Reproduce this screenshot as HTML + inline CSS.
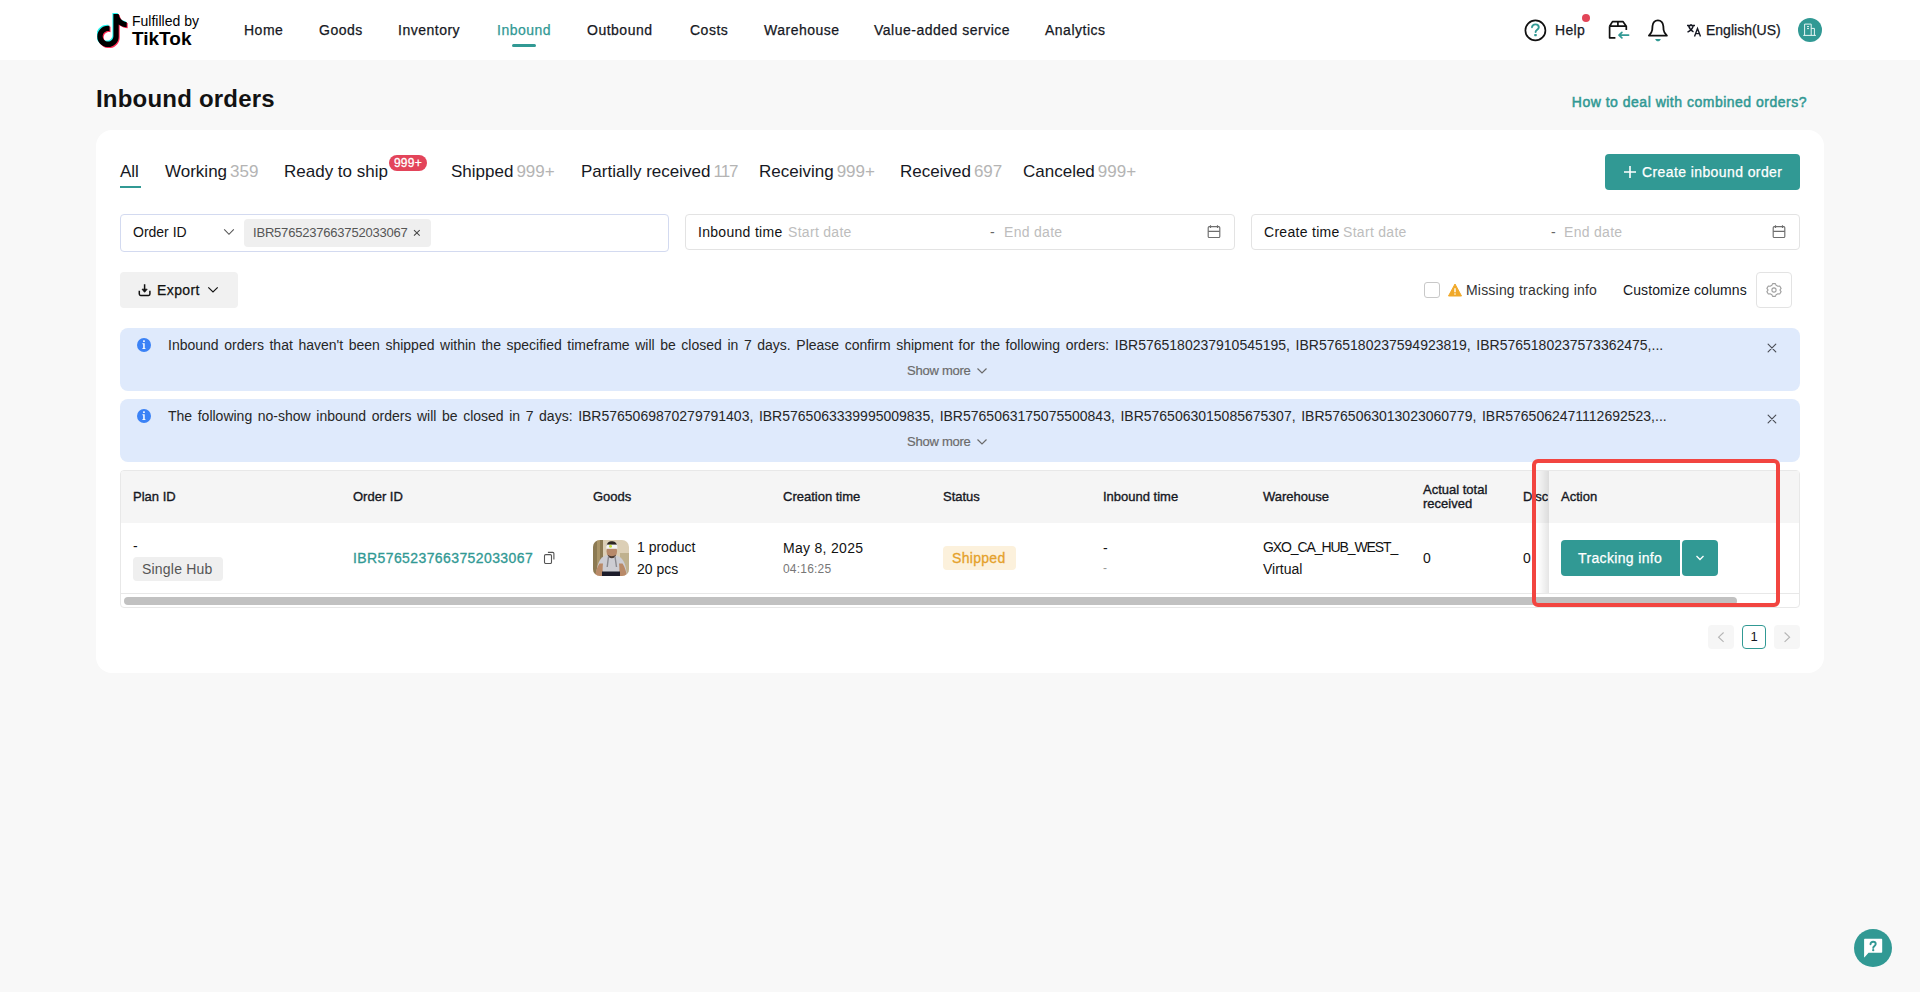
<!DOCTYPE html>
<html><head><meta charset="utf-8">
<style>
*{box-sizing:border-box;margin:0;padding:0}
html,body{width:1920px;height:992px;overflow:hidden}
body{background:#f8f8f8;font-family:"Liberation Sans",sans-serif;color:#121212;position:relative}
.a{position:absolute}
.t{position:absolute;white-space:nowrap;line-height:1}
.m{-webkit-text-stroke:0.25px currentColor}
#hdr{position:absolute;left:0;top:0;width:1920px;height:60px;background:#fff}
.nav{font-size:14px;top:23px;color:#161823;letter-spacing:0.5px}
.card{position:absolute;left:96px;top:130px;width:1728px;height:543px;background:#fff;border-radius:16px}
.tab{font-size:17px;top:163px;color:#161823}
.cnt{color:#b4b4b4;margin-left:3px}
.box{position:absolute;border:1px solid #e3e3e3;border-radius:4px;background:#fff}
.ph{color:#bdbdbd}
.alert{position:absolute;left:120px;width:1680px;height:63px;background:#dfeafc;border-radius:8px}
.th{font-size:13px;color:#161823;-webkit-text-stroke:0.35px #161823}
</style></head>
<body>
<div id="hdr">
  <!-- logo -->
  <svg class="a" style="left:97px;top:12px" width="34" height="36" viewBox="0 0 34 36">
    <g transform="translate(1,1)">
      <path fill="#25F4EE" d="M14.5 0h5.2c.3 2.6 1.6 5 3.6 6.4 1.3.9 2.8 1.5 4.4 1.6v5.2c-2.9 0-5.7-.9-8-2.6v11.8c0 5.9-4.8 10.7-10.7 10.7S-1.7 28.3-1.7 22.4 3.1 11.7 9 11.7c.5 0 1 0 1.5.1v5.4c-.5-.1-1-.2-1.5-.2-2.9 0-5.3 2.4-5.3 5.3S6.1 27.6 9 27.6s5.4-2.4 5.4-5.3V0z"/>
    </g>
    <g transform="translate(3,3)">
      <path fill="#FE2C55" d="M14.5 0h5.2c.3 2.6 1.6 5 3.6 6.4 1.3.9 2.8 1.5 4.4 1.6v5.2c-2.9 0-5.7-.9-8-2.6v11.8c0 5.9-4.8 10.7-10.7 10.7S-1.7 28.3-1.7 22.4 3.1 11.7 9 11.7c.5 0 1 0 1.5.1v5.4c-.5-.1-1-.2-1.5-.2-2.9 0-5.3 2.4-5.3 5.3S6.1 27.6 9 27.6s5.4-2.4 5.4-5.3V0z"/>
    </g>
    <g transform="translate(2,2)">
      <path fill="#000" d="M14.5 0h5.2c.3 2.6 1.6 5 3.6 6.4 1.3.9 2.8 1.5 4.4 1.6v5.2c-2.9 0-5.7-.9-8-2.6v11.8c0 5.9-4.8 10.7-10.7 10.7S-1.7 28.3-1.7 22.4 3.1 11.7 9 11.7c.5 0 1 0 1.5.1v5.4c-.5-.1-1-.2-1.5-.2-2.9 0-5.3 2.4-5.3 5.3S6.1 27.6 9 27.6s5.4-2.4 5.4-5.3V0z"/>
    </g>
  </svg>
  <div class="t" style="left:132px;top:14px;font-size:14px;color:#000">Fulfilled by</div>
  <div class="t" style="left:132px;top:29px;font-size:19px;font-weight:700;color:#000">TikTok</div>

  <div class="t nav m" style="left:244px">Home</div>
  <div class="t nav m" style="left:319px">Goods</div>
  <div class="t nav m" style="left:398px">Inventory</div>
  <div class="t nav m" style="left:497px;color:#319994">Inbound</div>
  <div class="a" style="left:512px;top:44px;width:24px;height:3px;border-radius:2px;background:#319994"></div>
  <div class="t nav m" style="left:587px">Outbound</div>
  <div class="t nav m" style="left:690px">Costs</div>
  <div class="t nav m" style="left:764px">Warehouse</div>
  <div class="t nav m" style="left:874px">Value-added service</div>
  <div class="t nav m" style="left:1045px">Analytics</div>

  <!-- right icons -->
  <svg class="a" style="left:1520px;top:10px" width="40" height="40" viewBox="0 0 40 40">
    <circle cx="15.4" cy="20.4" r="10" fill="none" stroke="#111" stroke-width="1.7"/>
    <path d="M12 17.2C12.3 15.4 13.7 14.4 15.4 14.4C17.3 14.4 18.8 15.6 18.8 17.3C18.8 19.6 15.6 19.9 15.6 22" fill="none" stroke="#319994" stroke-width="1.9" stroke-linecap="round"/>
    <rect x="14.2" y="24" width="2.6" height="2.2" rx=".6" fill="#319994"/>
  </svg>
  <div class="t m" style="left:1555px;top:23px;font-size:14px;color:#161823;letter-spacing:0.3px">Help</div>
  <div class="a" style="left:1582px;top:14px;width:8px;height:8px;border-radius:50%;background:#e24558"></div>

  <svg class="a" style="left:1600px;top:12px" width="80" height="36" viewBox="0 0 80 36">
    <path d="M9.6 14.2V25.8H15.4M9.6 14.2L12.5 9.6H22.9L26.3 14.2V17.9M9.6 14.2H26.3M17.9 9.6V14.2" fill="none" stroke="#111" stroke-width="1.7" stroke-linejoin="round"/>
    <path d="M28.6 23.1H19.2M21.9 20.3L19 23.1L21.9 25.9" fill="none" stroke="#319994" stroke-width="1.7" stroke-linecap="round" stroke-linejoin="round"/>
    <path d="M48.9 23.6C50.8 21.8 51.9 20.6 52.2 18L52.5 14C52.9 10.4 55.1 8.3 57.9 8.3S62.9 10.4 63.3 14L63.6 18C63.9 20.6 65 21.8 66.9 23.6Z" fill="none" stroke="#111" stroke-width="1.8" stroke-linejoin="round"/>
    <path d="M55.2 26.9H60.8C60.3 28.4 59.3 29.2 58 29.2S55.7 28.4 55.2 26.9Z" fill="#319994"/>
  </svg>
  <svg class="a" style="left:1686px;top:23px" width="16" height="14" viewBox="0 0 16 14">
    <path d="M1 2.5h8M5 1v1.5M2.5 2.5c.8 3 2.5 5 5 6.3M7.3 2.5c-.6 3-2.6 5.2-5.8 6.7" fill="none" stroke="#161823" stroke-width="1.4"/>
    <path d="M8.5 13.5l3-8 3 8M9.6 10.6h3.8" fill="none" stroke="#161823" stroke-width="1.4"/>
  </svg>
  <div class="t m" style="left:1706px;top:23px;font-size:14px;color:#161823">English(US)</div>
  <svg class="a" style="left:1798px;top:18px" width="24" height="24" viewBox="0 0 24 24">
    <circle cx="12" cy="12" r="12" fill="#319994"/>
    <path d="M6.6 17.4V6.1H13.2V17.4M13.2 10.4H16.4V17.4M5.3 17.4H17.9M9 8.6H11M9 10.6H11" fill="none" stroke="#e6f5f3" stroke-width="1"/>
  </svg>
</div>

<div class="t" style="left:96px;top:87px;font-size:24px;font-weight:700;color:#121212;letter-spacing:0.2px">Inbound orders</div>
<div class="t" style="right:113px;top:95px;font-size:14px;color:#319994;letter-spacing:0.5px;-webkit-text-stroke:0.5px #319994">How to deal with combined orders?</div>

<div class="card"></div>

<!-- tabs -->
<div class="t tab" style="left:120px">All</div>
<div class="a" style="left:120px;top:186px;width:21px;height:2px;background:#319994"></div>
<div class="t tab" style="left:165px">Working<span class="cnt">359</span></div>
<div class="t tab" style="left:284px">Ready to ship</div>
<div class="a" style="left:389px;top:155px;width:38px;height:16px;border-radius:8px;background:#e3445a;color:#fff;font-size:12px;line-height:16px;text-align:center;-webkit-text-stroke:0.3px #fff;letter-spacing:0.3px">999+</div>
<div class="t tab" style="left:451px">Shipped<span class="cnt">999+</span></div>
<div class="t tab" style="left:581px">Partially received<span class="cnt" style="letter-spacing:-1px">117</span></div>
<div class="t tab" style="left:759px">Receiving<span class="cnt">999+</span></div>
<div class="t tab" style="left:900px">Received<span class="cnt">697</span></div>
<div class="t tab" style="left:1023px">Canceled<span class="cnt">999+</span></div>

<!-- create button -->
<div class="a" style="left:1605px;top:154px;width:195px;height:36px;border-radius:4px;background:#319994"></div>
<svg class="a" style="left:1623px;top:165px" width="14" height="14" viewBox="0 0 14 14"><path d="M7 1v12M1 7h12" stroke="#fff" stroke-width="1.6"/></svg>
<div class="t m" style="left:1642px;top:165px;font-size:14px;color:#fff;letter-spacing:0.4px">Create inbound order</div>

<!-- filters -->
<div class="box" style="left:120px;top:214px;width:549px;height:38px;border-color:#d3daf0"></div>
<div class="t" style="left:133px;top:225px;font-size:14px">Order ID</div>
<svg class="a" style="left:223px;top:227px" width="12" height="10" viewBox="0 0 12 10"><path d="M1.2 2.4L6 7.3L10.8 2.4" fill="none" stroke="#555" stroke-width="1.1"/></svg>
<div class="a" style="left:244px;top:219px;width:187px;height:28px;border-radius:4px;background:#efefef"></div>
<div class="t" style="left:253px;top:226px;font-size:13px;color:#555;letter-spacing:-0.2px">IBR5765237663752033067</div>
<svg class="a" style="left:412px;top:228px" width="10" height="10" viewBox="0 0 10 10"><path d="M2 2.2L7.7 7.7M7.7 2.2L2 7.7" stroke="#444" stroke-width="1.05"/></svg>

<div class="box" style="left:685px;top:214px;width:550px;height:36px"></div>
<div class="t" style="left:698px;top:225px;font-size:14px;letter-spacing:0.3px">Inbound time</div>
<div class="t ph" style="left:788px;top:225px;font-size:14px;letter-spacing:0.3px">Start date</div>
<div class="t" style="left:990px;top:225px;font-size:14px;color:#666">-</div>
<div class="t ph" style="left:1004px;top:225px;font-size:14px;letter-spacing:0.3px">End date</div>
<svg class="a" style="left:1207px;top:225px" width="14" height="14" viewBox="0 0 14 14"><rect x="1.2" y="1.6" width="11.6" height="10.9" rx="1.1" fill="none" stroke="#6e6e6e" stroke-width="1.15"/><path d="M1.2 6.4h11.6M3.5 0.3v2.6M10.5 0.3v2.6" stroke="#6e6e6e" stroke-width="1.15"/></svg>

<div class="box" style="left:1251px;top:214px;width:549px;height:36px"></div>
<div class="t" style="left:1264px;top:225px;font-size:14px;letter-spacing:0.3px">Create time</div>
<div class="t ph" style="left:1343px;top:225px;font-size:14px;letter-spacing:0.3px">Start date</div>
<div class="t" style="left:1551px;top:225px;font-size:14px;color:#666">-</div>
<div class="t ph" style="left:1564px;top:225px;font-size:14px;letter-spacing:0.3px">End date</div>
<svg class="a" style="left:1772px;top:225px" width="14" height="14" viewBox="0 0 14 14"><rect x="1.2" y="1.6" width="11.6" height="10.9" rx="1.1" fill="none" stroke="#6e6e6e" stroke-width="1.15"/><path d="M1.2 6.4h11.6M3.5 0.3v2.6M10.5 0.3v2.6" stroke="#6e6e6e" stroke-width="1.15"/></svg>

<!-- export row -->
<div class="a" style="left:120px;top:272px;width:118px;height:36px;border-radius:4px;background:#f1f1f1"></div>
<svg class="a" style="left:137px;top:282px" width="15" height="15" viewBox="0 0 15 15"><path d="M7.6 2.2v7M2.3 8.8v3.3c0 .8.5 1.3 1.3 1.3h8c.8 0 1.3-.5 1.3-1.3V8.8" fill="none" stroke="#111" stroke-width="1.5"/><path d="M5 7.2L7.6 10.3L10.2 7.2Z" fill="#111" stroke="#111" stroke-width="0.8" stroke-linejoin="round"/></svg>
<div class="t m" style="left:157px;top:283px;font-size:14px;letter-spacing:0.4px">Export</div>
<svg class="a" style="left:207px;top:285px" width="12" height="9" viewBox="0 0 12 9"><path d="M1.3 2.3l4.7 4.6 4.7-4.6" fill="none" stroke="#111" stroke-width="1.15"/></svg>

<div class="a" style="left:1424px;top:282px;width:16px;height:16px;border:1px solid #c8c8c8;border-radius:3px;background:#fff"></div>
<svg class="a" style="left:1448px;top:283px" width="14" height="14" viewBox="0 0 14 14"><path d="M7 1L13.5 13H.5z" fill="#f0a92a" stroke="#f0a92a" stroke-linejoin="round" stroke-width="1"/><path d="M7 5.2v4" stroke="#fff" stroke-width="1.4"/><circle cx="7" cy="11" r=".8" fill="#fff"/></svg>
<div class="t" style="left:1466px;top:283px;font-size:14px;color:#333;letter-spacing:0.2px">Missing tracking info</div>
<div class="t" style="left:1623px;top:283px;font-size:14px;color:#161823;letter-spacing:0.1px">Customize columns</div>
<div class="box" style="left:1756px;top:272px;width:36px;height:36px"></div>
<svg class="a" style="left:1766px;top:282px" width="16" height="16" viewBox="0 0 16 16"><path d="M6.6 1.6H9.4L10.1 3.3L11.9 4.3L13.7 4L15.1 6.4L14 7.9V8.1L15.1 9.6L13.7 12L11.9 11.7L10.1 12.7L9.4 14.4H6.6L5.9 12.7L4.1 11.7L2.3 12L0.9 9.6L2 8.1V7.9L0.9 6.4L2.3 4L4.1 4.3L5.9 3.3Z" fill="none" stroke="#a0a0a0" stroke-width="1.1" stroke-linejoin="round"/><circle cx="8" cy="8" r="2.1" fill="none" stroke="#a0a0a0" stroke-width="1.1"/></svg>

<!-- alerts -->
<div class="alert" style="top:328px"></div>
<div class="alert" style="top:399px"></div>
<svg class="a" style="left:137px;top:338px" width="14" height="14" viewBox="0 0 14 14"><circle cx="7" cy="7" r="7" fill="#3b82f6"/><path d="M5.4 5.3H7.7V10.2H8.5V11.1H5.3V10.2H6.2V6.2H5.4Z" fill="#fff"/><rect x="6.1" y="2.3" width="1.7" height="1.6" rx=".5" fill="#fff"/></svg>
<svg class="a" style="left:137px;top:409px" width="14" height="14" viewBox="0 0 14 14"><circle cx="7" cy="7" r="7" fill="#3b82f6"/><path d="M5.4 5.3H7.7V10.2H8.5V11.1H5.3V10.2H6.2V6.2H5.4Z" fill="#fff"/><rect x="6.1" y="2.3" width="1.7" height="1.6" rx=".5" fill="#fff"/></svg>
<div class="t" style="left:168px;top:338px;font-size:14px;color:#262626;word-spacing:1.7px">Inbound orders that haven't been shipped within the specified timeframe will be closed in 7 days. Please confirm shipment for the following orders: IBR5765180237910545195, IBR5765180237594923819, IBR5765180237573362475,...</div>
<div class="t" style="left:168px;top:409px;font-size:14px;color:#262626;word-spacing:1.7px">The following no-show inbound orders will be closed in 7 days: IBR5765069870279791403, IBR5765063339995009835, IBR5765063175075500843, IBR5765063015085675307, IBR5765063013023060779, IBR5765062471112692523,...</div>
<div class="t m" style="left:907px;top:364px;font-size:13px;color:#6b6b6b;letter-spacing:-0.25px;-webkit-text-stroke-width:0.2px">Show more</div>
<svg class="a" style="left:976px;top:366px" width="12" height="9" viewBox="0 0 12 9"><path d="M1.5 2.5l4.5 4.5 4.5-4.5" fill="none" stroke="#6b6b6b" stroke-width="1.2"/></svg>
<div class="t m" style="left:907px;top:435px;font-size:13px;color:#6b6b6b;letter-spacing:-0.25px;-webkit-text-stroke-width:0.2px">Show more</div>
<svg class="a" style="left:976px;top:437px" width="12" height="9" viewBox="0 0 12 9"><path d="M1.5 2.5l4.5 4.5 4.5-4.5" fill="none" stroke="#6b6b6b" stroke-width="1.2"/></svg>
<svg class="a" style="left:1766px;top:342px" width="12" height="12" viewBox="0 0 12 12"><path d="M2.1 2.2L9.8 9.8M9.8 2.2L2.1 9.8" stroke="#4a4d55" stroke-width="1.15" stroke-linecap="round"/></svg>
<svg class="a" style="left:1766px;top:413px" width="12" height="12" viewBox="0 0 12 12"><path d="M2.1 2.2L9.8 9.8M9.8 2.2L2.1 9.8" stroke="#4a4d55" stroke-width="1.15" stroke-linecap="round"/></svg>

<!-- table -->
<div class="a" style="left:120px;top:470px;width:1680px;height:138px;border:1px solid #e8e8e8;border-radius:4px;background:#fff;overflow:hidden">
  <div class="a" style="left:0;top:0;width:1680px;height:52px;background:#f5f5f5"></div>
  <div class="a" style="left:0;top:122px;width:1680px;height:1px;background:#e8e8e8"></div>
  <div class="a" style="left:3px;top:126px;width:1613px;height:8px;border-radius:4px;background:#c1c1c1"></div>
</div>
<div class="t th" style="left:133px;top:490px">Plan ID</div>
<div class="t th" style="left:353px;top:490px">Order ID</div>
<div class="t th" style="left:593px;top:490px">Goods</div>
<div class="t th" style="left:783px;top:490px">Creation time</div>
<div class="t th" style="left:943px;top:490px">Status</div>
<div class="t th" style="left:1103px;top:490px">Inbound time</div>
<div class="t th" style="left:1263px;top:490px">Warehouse</div>
<div class="t th" style="left:1423px;top:483px;line-height:14px">Actual total<br>received</div>
<div class="a" style="left:1523px;top:472px;width:25px;height:120px;overflow:hidden">
  <div class="t th" style="left:0;top:18px">Discrepancy</div>
  <div class="t" style="left:0;top:79px;font-size:14px">0</div>
</div>
<div class="a" style="left:1538px;top:471px;width:11px;height:122px;background:linear-gradient(90deg,rgba(0,0,0,0),rgba(0,0,0,0.1))"></div>
<div class="a" style="left:1549px;top:471px;width:250px;height:52px;background:#f5f5f5"></div>
<div class="a" style="left:1549px;top:523px;width:250px;height:69px;background:#fff"></div>
<div class="t th" style="left:1561px;top:490px">Action</div>

<div class="t" style="left:133px;top:539px;font-size:14px">-</div>
<div class="a" style="left:133px;top:557px;width:90px;height:24px;border-radius:4px;background:#efefef"></div>
<div class="t" style="left:142px;top:562px;font-size:14px;color:#555;letter-spacing:0.2px">Single Hub</div>
<div class="t" style="left:353px;top:551px;font-size:14px;color:#319994;letter-spacing:0.4px;-webkit-text-stroke:0.3px #319994">IBR5765237663752033067</div>
<svg class="a" style="left:543px;top:551px" width="12" height="13" viewBox="0 0 12 13"><path d="M4.9 1.4H9.8C10.4 1.4 10.9 1.9 10.9 2.5V8.6" fill="none" stroke="#555" stroke-width="1.1"/><rect x="1.5" y="3.6" width="7" height="8.9" rx="1.2" fill="none" stroke="#555" stroke-width="1.1"/></svg>
<svg class="a" style="left:593px;top:540px" width="36" height="36" viewBox="0 0 36 36">
  <defs><clipPath id="pc"><rect width="36" height="36" rx="7"/></clipPath><filter id="bl"><feGaussianBlur stdDeviation="0.7"/></filter></defs>
  <g clip-path="url(#pc)">
    <rect width="36" height="36" fill="#dccfb6"/>
    <g filter="url(#bl)">
    <rect x="-2" y="-2" width="12" height="40" fill="#8c7a52"/>
    <rect x="4" y="-2" width="3" height="40" fill="#a99468"/>
    <rect x="27" y="13" width="12" height="25" fill="#bfb18e"/>
    <path d="M3 36C3.5 29 5 21 9 17.5C12 15.5 14.5 14.5 18 14.5C21.5 14.5 24.5 15.5 27.5 17.5C32 21 33.5 29 34 36Z" fill="#cdcdd3"/>
    <path d="M2 36C3 31 4 27 6.5 23.5L10 23.5C9.5 28 9.5 32 10 36Z" fill="#b98a68"/>
    <path d="M34 36C33 31 32 27 29.5 23.5L26 23.5C26.5 28 26.5 32 26 36Z" fill="#b98a68"/>
    <rect x="9" y="31.5" width="18" height="6" fill="#1b1f2b"/>
    <ellipse cx="18.8" cy="11" rx="5.3" ry="6.6" fill="#b7896a"/>
    <path d="M14.5 14.5C15.5 17.5 17 18.2 18.8 18.2S22.2 17.5 23.2 14.5C22 15.8 20.5 16.2 18.8 16.2S15.6 15.8 14.5 14.5Z" fill="#4a3a30"/>
    <path d="M13.5 6C14 2.5 16.2 1.2 18.8 1.2S23.6 2.5 24.2 6Z" fill="#2e2620"/>
    <rect x="13.4" y="4.6" width="10.9" height="4.2" fill="#f4f4f4"/>
    <circle cx="17.5" cy="6.3" r="1.5" fill="#c6df3c"/>
    <path d="M15.5 16.5L14.2 27M22 16.5L23.5 27" stroke="#8a8a90" stroke-width="1.4"/>
    </g>
  </g>
</svg>
<div class="t" style="left:637px;top:540px;font-size:14px">1 product</div>
<div class="t" style="left:637px;top:562px;font-size:14px">20 pcs</div>
<div class="t" style="left:783px;top:541px;font-size:14px;letter-spacing:0.3px">May 8, 2025</div>
<div class="t" style="left:783px;top:563px;font-size:12px;color:#777;letter-spacing:0.2px">04:16:25</div>
<div class="a" style="left:943px;top:546px;width:73px;height:24px;border-radius:4px;background:#fcf1dc"></div>
<div class="t" style="left:952px;top:551px;font-size:14px;color:#e5a12b;letter-spacing:0.3px;-webkit-text-stroke:0.3px #e5a12b">Shipped</div>
<div class="t" style="left:1103px;top:541px;font-size:14px">-</div>
<div class="t" style="left:1103px;top:562px;font-size:12px;color:#999">-</div>
<div class="t" style="left:1263px;top:540px;font-size:14px;letter-spacing:-1.1px">GXO_CA_HUB_WEST_</div>
<div class="t" style="left:1263px;top:562px;font-size:14px">Virtual</div>
<div class="t" style="left:1423px;top:551px;font-size:14px">0</div>

<div class="a" style="left:1561px;top:540px;width:119px;height:36px;border-radius:4px 0 0 4px;background:#319994"></div>
<div class="t m" style="left:1578px;top:551px;font-size:14px;color:#fff;letter-spacing:0.35px">Tracking info</div>
<div class="a" style="left:1682px;top:540px;width:36px;height:36px;border-radius:4px;background:#319994"></div>
<svg class="a" style="left:1695px;top:554px" width="10" height="8" viewBox="0 0 10 8"><path d="M1.5 2l3.5 3.5L8.5 2" fill="none" stroke="#fff" stroke-width="1.3"/></svg>

<!-- red annotation -->
<div class="a" style="left:1532px;top:459px;width:248px;height:148px;border:4px solid #f24540;border-radius:6px"></div>

<!-- pagination -->
<div class="a" style="left:1708px;top:625px;width:26px;height:24px;border-radius:4px;background:#f6f6f6"></div>
<svg class="a" style="left:1716px;top:631px" width="10" height="12" viewBox="0 0 10 12"><path d="M7.6 1.5L2.6 6.2L7.6 10.9" fill="none" stroke="#b5b5b5" stroke-width="1.15"/></svg>
<div class="a" style="left:1742px;top:625px;width:24px;height:24px;border-radius:4px;border:1px solid #319994;background:#fff;font-size:13px;line-height:22px;text-align:center;color:#161823">1</div>
<div class="a" style="left:1774px;top:625px;width:26px;height:24px;border-radius:4px;background:#f6f6f6"></div>
<svg class="a" style="left:1782px;top:631px" width="10" height="12" viewBox="0 0 10 12"><path d="M2.6 1.5L7.6 6.2L2.6 10.9" fill="none" stroke="#b5b5b5" stroke-width="1.15"/></svg>

<!-- chat button -->
<div class="a" style="left:1854px;top:929px;width:38px;height:38px;border-radius:50%;background:#319994"></div>
<svg class="a" style="left:1863px;top:938px" width="20" height="20" viewBox="0 0 20 20"><path d="M2.1 0.7H18.2C18.8 0.7 19.2 1.1 19.2 1.7V13.8C19.2 14.4 18.8 14.8 18.2 14.8H5.5L1.6 19.3C1.4 19.5 1.1 19.4 1.1 19.1V1.7C1.1 1.1 1.5 0.7 2.1 0.7Z" fill="#fff"/><path d="M7.5 6.2C7.5 4.8 8.6 3.8 10.1 3.8S12.7 4.8 12.7 6.1C12.7 7.8 10.2 8 10.2 9.9" fill="none" stroke="#319994" stroke-width="1.9" stroke-linecap="round"/><circle cx="10.2" cy="12.2" r="1.15" fill="#319994"/></svg>
</body></html>
